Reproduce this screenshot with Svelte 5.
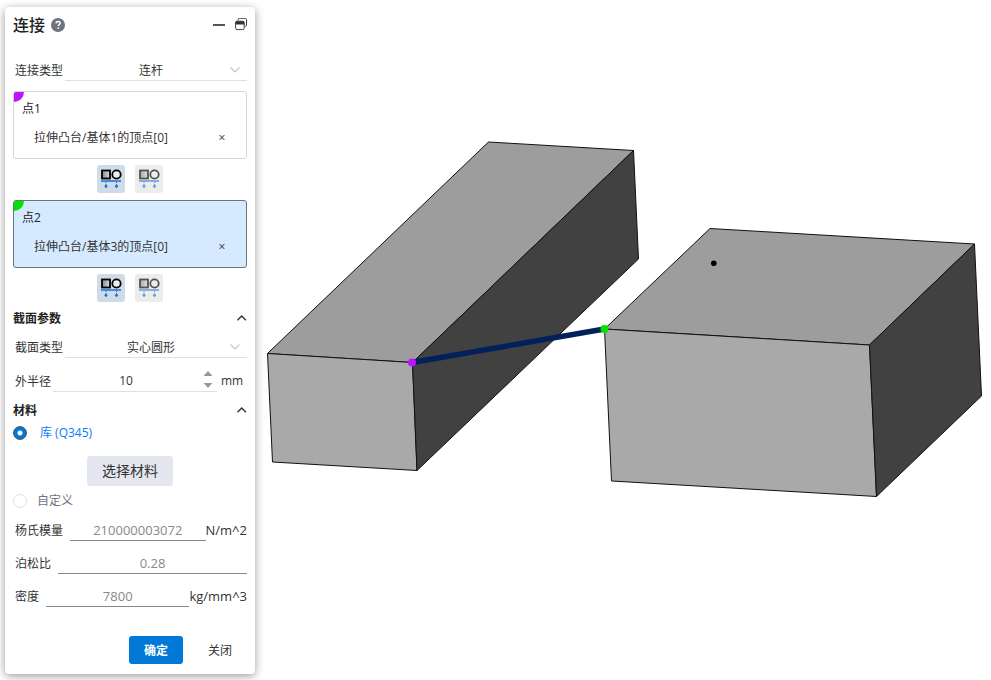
<script lang="ts">
  type Mode = 'shared' | 'split';

  type Point = {
    label: string;
    target: string;
    color: string;
    mode: Mode;
  };

  const modes: { value: Mode; label: string }[] = [
    { value: 'shared', label: '整体连接' },
    { value: 'split', label: '独立连接' },
  ];

  let points = $state<Point[]>([
    { label: '点1', target: '拉伸凸台/基体1的顶点[0]', color: '#c012ff', mode: 'shared' },
    { label: '点2', target: '拉伸凸台/基体3的顶点[0]', color: '#00e400', mode: 'shared' },
  ]);

  const properties = [
    { id: 'young', label: '杨氏模量', value: '210000003072', unit: 'N/m^2' },
    { id: 'poisson', label: '泊松比', value: '0.28', unit: '' },
    { id: 'density', label: '密度', value: '7800', unit: 'kg/mm^3' },
  ];

  let active = $state(1);
  let radius = $state(10);
  let source = $state('library');
  let sectionOpen = $state(true);
  let materialOpen = $state(true);
</script>

{#snippet modeIcon()}
  <svg width="28" height="28" viewBox="0 0 28 28" aria-hidden="true">
    <defs>
      <linearGradient id="face">
        <stop offset="0" stop-color="#888" />
        <stop offset="1" stop-color="#ddd" />
      </linearGradient>
    </defs>
    <rect x="5" y="5.5" width="8" height="8" fill="url(#face)" stroke="#000" stroke-width="1.8" />
    <circle cx="19.5" cy="9.5" r="4.2" fill="#eee" stroke="#000" stroke-width="1.8" />
    <path d="M4 16h20" stroke="#1c6fd6" stroke-width="1.5" />
    <path d="M9 17v3M19.5 17v3" stroke="#1c6fd6" stroke-width="1" stroke-dasharray="1 1" />
    <path d="m9 19.5 1.8 1.8L9 23.3l-1.8-2zM19.5 19.5l1.8 1.8-1.8 2-1.8-2z" fill="#1c6fd6" />
  </svg>
{/snippet}

{#snippet chevron()}
  <svg class="chevron" width="12" height="8" viewBox="0 0 12 8" aria-hidden="true">
    <path d="M1.5 1.5 6 6l4.5-4.5" fill="none" stroke="#c0c4cc" stroke-width="1.1" />
  </svg>
{/snippet}

{#snippet heading(text: string, open: boolean, toggle: () => void)}
  <h2>
    <button type="button" class="section-toggle" aria-expanded={open} onclick={toggle}>
      {text}
      <svg class:closed={!open} width="12" height="8" viewBox="0 0 12 8" aria-hidden="true">
        <path d="M2.5 5.2 6.7 1l4.2 4.2" fill="none" stroke="#333" stroke-width="1.4" />
      </svg>
    </button>
  </h2>
{/snippet}

<main>
  <form class="panel" onsubmit={(e) => e.preventDefault()}>
    <header>
      <h1>连接</h1>
      <button type="button" class="icon help" aria-label="帮助">
        <svg width="14" height="14" viewBox="0 0 14 14">
          <circle cx="7" cy="7" r="7" fill="#6c757d" />
          <path
            d="M5 5.4c.1-1.2.9-1.9 2.1-1.9 1.1 0 2 .7 2 1.7 0 1.4-1.8 1.4-1.8 2.9"
            fill="none"
            stroke="#fff"
            stroke-width="1.5"
          />
          <circle cx="7.3" cy="10.1" r=".95" fill="#fff" />
        </svg>
      </button>
      <span class="spacer"></span>
      <button type="button" class="icon" aria-label="最小化">
        <svg width="12" height="14" viewBox="0 0 12 14">
          <path d="M0 7h12" stroke="#555" stroke-width="2" />
        </svg>
      </button>
      <button type="button" class="icon restore" aria-label="还原">
        <svg width="12" height="14" viewBox="0 0 12 14">
          <path
            d="M3.2 2.6V1.3c0-.7.4-1 1-1h6.2c.7 0 1.1.4 1.1 1v5.9c0 .7-.4 1-1.1 1H9.3"
            fill="none"
            stroke="#444"
          />
          <rect x=".6" y="3.2" width="8.6" height="8.4" rx="1.4" fill="#fff" stroke="#444" />
          <path d="M.6 6.5v-2c0-.9.5-1.3 1.4-1.3h5.8c.9 0 1.4.4 1.4 1.3v2z" fill="#333" />
        </svg>
      </button>
    </header>

    <div class="row">
      <label for="link-type">连接类型</label>
      <div class="select">
        <select id="link-type">
          <option>连杆</option>
        </select>
        {@render chevron()}
      </div>
    </div>

    <div class="points">
      {#each points as point, i}
        <section class="card" class:active={active === i}>
          <span class="corner" style:background={point.color}></span>
          <button type="button" class="card-title" onclick={() => (active = i)}>{point.label}</button>
          <div class="target">
            <span>{point.target}</span>
            <button type="button" class="remove" aria-label="移除">×</button>
          </div>
        </section>
        <div class="modes" role="group" aria-label={point.label}>
          {#each modes as mode}
            <button
              type="button"
              class="mode"
              aria-label={mode.label}
              aria-pressed={point.mode === mode.value}
              onclick={() => (point.mode = mode.value)}
            >
              {@render modeIcon()}
            </button>
          {/each}
        </div>
      {/each}
    </div>

    {@render heading('截面参数', sectionOpen, () => (sectionOpen = !sectionOpen))}
    {#if sectionOpen}
      <div class="row section-type">
        <label for="section-type">截面类型</label>
        <div class="select">
          <select id="section-type">
            <option>实心圆形</option>
          </select>
          {@render chevron()}
        </div>
      </div>
      <div class="row radius">
        <label for="radius">外半径</label>
        <div class="stepper">
          <input id="radius" type="number" bind:value={radius} />
          <span class="arrows">
            <button type="button" class="icon" aria-label="增加" onclick={() => (radius += 1)}>
              <svg width="10" height="5" viewBox="0 0 10 5"><path d="M5 0l4.5 5h-9z" fill="#999" /></svg>
            </button>
            <button type="button" class="icon" aria-label="减少" onclick={() => (radius -= 1)}>
              <svg width="10" height="5" viewBox="0 0 10 5"><path d="M.5 0h9L5 5z" fill="#999" /></svg>
            </button>
          </span>
        </div>
        <span class="unit">mm</span>
      </div>
    {/if}

    {@render heading('材料', materialOpen, () => (materialOpen = !materialOpen))}
    {#if materialOpen}
      <label class="radio library">
        <input type="radio" name="source" value="library" bind:group={source} />
        库 (Q345)
      </label>
      <button type="button" class="pick">选择材料</button>
      <label class="radio custom">
        <input type="radio" name="source" value="custom" bind:group={source} />
        自定义
      </label>
      <div class="properties">
        {#each properties as property}
          <div class="row property">
            <label for={property.id}>{property.label}</label>
            <input id={property.id} type="text" value={property.value} readonly={source === 'library'} />
            {#if property.unit}<span>{property.unit}</span>{/if}
          </div>
        {/each}
      </div>
    {/if}

    <footer>
      <button type="submit" class="confirm">确定</button>
      <button type="button" class="close">关闭</button>
    </footer>
  </form>

  <svg class="scene" viewBox="260 0 731 680" role="img" aria-label="模型视图">
    <g stroke="#111" stroke-width="1" stroke-linejoin="round">
      <path d="M488.5 142 633.5 150.5 412.5 362.5 267.5 353.5z" fill="#9d9d9d" />
      <path d="M267.5 353.5 412.5 362.5 417 470.5 272.5 462z" fill="#a9a9a9" />
      <path d="M633.5 150.5 638.5 259 417 470.5 412.5 362.5z" fill="#414141" />
      <path d="M710 228.5 974.5 244 869.5 345 604.5 329z" fill="#9d9d9d" />
      <path d="M604.5 329 869.5 345 876.5 496.5 611.5 481z" fill="#a9a9a9" />
      <path d="M974.5 244 981.5 396 876.5 496.5 869.5 345z" fill="#414141" />
    </g>
    <path d="M412 362.5 604.5 329" stroke="#03205a" stroke-width="5.5" />
    <circle cx="412" cy="362.5" r="4" fill="#c012ff" />
    <circle cx="604.5" cy="329" r="4" fill="#00e400" />
    <circle cx="713.8" cy="263.3" r="2.8" fill="#000" />
  </svg>
</main>

<style>
  :global(body) {
    margin: 0;
    background: #fff;
  }
  main {
    display: flex;
    align-items: flex-start;
    color: #333;
    font: 12px/20px 'Open Sans', 'Noto Sans CJK SC', sans-serif;
  }
  .panel {
    position: relative;
    z-index: 1;
    box-sizing: border-box;
    flex: none;
    width: 250px;
    margin: 7px 5px 6px;
    padding: 0 8px 10px;
    border-radius: 4px;
    background: #fff;
    box-shadow: 0 2px 10px rgba(0, 0, 0, 0.4);
  }
  .scene {
    display: block;
    flex: 1;
    min-width: 0;
  }
  button,
  input,
  select {
    box-sizing: border-box;
    margin: 0;
    padding: 0;
    border: 0;
    background: none;
    color: inherit;
    font: inherit;
  }
  button {
    cursor: pointer;
  }
  svg {
    display: block;
  }
  header {
    display: flex;
    align-items: center;
    gap: 6px;
    height: 36px;
    margin-bottom: 16px;
  }
  h1 {
    margin: 0;
    color: #222;
    font-size: 16px;
    font-weight: 500;
  }
  .spacer {
    flex: 1;
  }
  .restore {
    margin-left: 4px;
  }
  .row {
    display: flex;
    align-items: center;
    gap: 2px;
    height: 22px;
    padding-left: 2px;
  }
  .row label {
    flex: none;
    padding-top: 2px;
  }
  .select {
    position: relative;
    flex: 1;
  }
  .select select {
    display: block;
    width: 100%;
    height: 22px;
    padding: 2px 10px 0 0;
    border-bottom: 1px solid #dcdfe6;
    appearance: none;
    text-align: center;
    text-align-last: center;
  }
  .chevron {
    position: absolute;
    top: 7px;
    right: 6px;
    pointer-events: none;
  }
  .points {
    margin-top: 10px;
  }
  .card {
    position: relative;
    box-sizing: border-box;
    height: 68px;
    padding: 7px 8px;
    border: 1px solid #d6d6da;
    border-radius: 3px;
    overflow: hidden;
  }
  .card.active {
    border-color: #6b7280;
    background: #d5e9ff;
  }
  .corner {
    position: absolute;
    top: 0;
    left: 0;
    width: 10px;
    height: 10px;
    border-bottom-right-radius: 10px;
  }
  .card-title {
    display: block;
    color: #222;
  }
  .target {
    display: flex;
    justify-content: space-between;
    margin-top: 9px;
    padding: 0 12px;
  }
  .remove {
    width: 8px;
    text-align: center;
  }
  .modes {
    display: flex;
    justify-content: center;
    gap: 10px;
    margin: 6px 0;
  }
  .modes + .card {
    margin-top: 7px;
  }
  .mode {
    border-radius: 3px;
    background: #ececec;
  }
  .mode svg {
    opacity: 0.65;
  }
  .mode[aria-pressed='true'] {
    background: #cddce7;
  }
  .mode[aria-pressed='true'] svg {
    opacity: 1;
  }
  h2 {
    margin: 8px 0 0;
    font-size: 12px;
    font-weight: 600;
  }
  .points + h2 {
    margin-top: 6px;
  }
  .section-toggle {
    display: flex;
    align-items: center;
    justify-content: space-between;
    width: 100%;
    height: 20px;
    padding-top: 2px;
    color: #222;
  }
  .section-toggle .closed {
    transform: rotate(180deg);
  }
  .section-type {
    margin-top: 8px;
  }
  .radius {
    margin-top: 12px;
  }
  .stepper {
    display: flex;
    flex: 1;
    box-sizing: border-box;
    min-width: 0;
    height: 22px;
    border-bottom: 1px solid #dcdfe6;
  }
  .stepper input {
    flex: 1;
    min-width: 0;
    appearance: textfield;
    text-align: center;
  }
  .stepper input::-webkit-inner-spin-button {
    display: none;
  }
  .arrows {
    display: flex;
    flex-direction: column;
    justify-content: space-between;
    height: 17px;
    padding: 1px 4px 0;
  }
  .unit {
    box-sizing: border-box;
    flex: none;
    width: 28px;
    padding-left: 2px;
  }
  .radio {
    display: flex;
    align-items: center;
    height: 20px;
  }
  .radio input {
    width: 14px;
    height: 14px;
    border: 1px solid #dcdfe6;
    border-radius: 50%;
    appearance: none;
  }
  .radio input:checked {
    border-color: #555;
    background: radial-gradient(circle, #fff 2px, #0078d7 3px);
  }
  .library {
    gap: 13px;
    margin-top: 3px;
    color: #0a7cff;
  }
  .custom {
    gap: 10px;
    margin-top: 5px;
    color: #6c757d;
  }
  .pick {
    display: block;
    height: 30px;
    margin: 13px auto 0;
    padding: 0 15px;
    border-radius: 3px;
    background: #e4e7ef;
    font-size: 14px;
  }
  .properties {
    display: grid;
    grid-template-columns: minmax(0, 1fr);
    gap: 11px;
    margin-top: 8px;
  }
  .property {
    gap: 0;
  }
  .property label {
    margin-right: 7px;
  }
  .property input {
    flex: 1;
    min-width: 0;
    height: 22px;
    border-bottom: 1px solid #888;
    color: #888;
    font-size: 13px;
    text-align: center;
  }
  .property span {
    font-size: 13px;
  }
  footer {
    display: flex;
    justify-content: flex-end;
    gap: 10px;
    margin-top: 29px;
  }
  footer button {
    width: 54px;
    height: 28px;
    padding-top: 2px;
    border-radius: 3px;
  }
  .confirm {
    background: #0078d7;
    color: #fff;
    font-weight: 600;
  }
</style>
